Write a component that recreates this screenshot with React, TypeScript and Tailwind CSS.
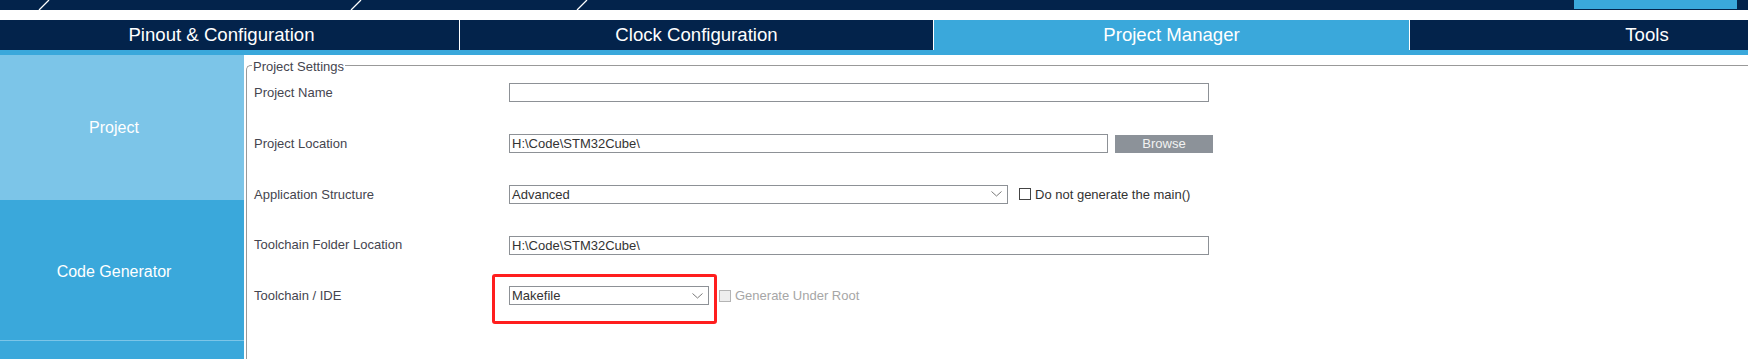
import React from "react";

const tabs = [
  { label: "Pinout & Configuration", cls: "w-[475px] bg-[#03234b]" },
  { label: "Clock Configuration", cls: "w-[474px] bg-[#03234b] border-l border-white" },
  { label: "Project Manager", cls: "w-[476px] bg-[#3aa8db] border-l border-white" },
  { label: "Tools", cls: "w-[475px] bg-[#03234b] border-l border-white" },
];

function Slash() {
  return (
    <svg width="12" height="10" viewBox="0 0 12 10" className="shrink-0">
      <line x1="1" y1="10" x2="11" y2="0" stroke="white" strokeWidth="1.3" />
    </svg>
  );
}

function Chevron() {
  return (
    <svg width="11" height="6" viewBox="0 0 11 6" className="shrink-0">
      <polyline points="0.5,0.5 5.5,5 10.5,0.5" fill="none" stroke="#7a7a7a" strokeWidth="1" />
    </svg>
  );
}

function Field({ value, className }: { value?: string; className: string }) {
  return (
    <div className={`h-[19px] border border-[#8d9196] bg-white px-[2px] text-[13px] leading-[17px] text-[#333] ${className}`}>
      {value}
    </div>
  );
}

function Select({ value, className }: { value: string; className: string }) {
  return (
    <div className={`flex h-[19px] items-center justify-between border border-[#8d9196] bg-white pl-[2px] pr-[5px] text-[13px] leading-[17px] text-[#333] ${className}`}>
      <span>{value}</span>
      <Chevron />
    </div>
  );
}

function Row({ label, children }: { label: string; children: React.ReactNode }) {
  return (
    <div className="relative flex h-[50.75px] items-center">
      <div className="w-[262px] shrink-0 pl-[7px] text-[13px] text-[#45454f]">{label}</div>
      {children}
    </div>
  );
}

export default function App() {
  return (
    <div className="h-[359px] w-[1748px] overflow-hidden bg-white font-['Liberation_Sans',Arial,sans-serif]">
      {/* breadcrumb band */}
      <div className="flex h-[10px] items-start bg-[#03234b]">
        <div className="ml-[38px]"><Slash /></div>
        <div className="ml-[300px]"><Slash /></div>
        <div className="ml-[214px]"><Slash /></div>
        <div className="ml-auto mr-[11px] h-[9px] w-[163px] bg-[#3aa8db]" />
      </div>
      <div className="h-[10px]" />

      <div className="-ml-[16px] w-[1764px]">
        {/* tabs */}
        <div className="flex h-[30px]">
          {tabs.map((t) => (
            <div key={t.label} className={`flex shrink-0 items-center justify-center text-[18.6px] text-white ${t.cls}`}>
              {t.label}
            </div>
          ))}
        </div>
        <div className="h-[5px] bg-[#3aa8db]" />

        <div className="flex h-[304px]">
          {/* sidebar */}
          <div className="flex w-[260px] shrink-0 flex-col bg-[#3aa8db] text-[16px] text-white">
            <div className="flex h-[145px] items-center justify-center bg-[#7cc5e8] pt-[1px]">Project</div>
            <div className="flex h-[141px] items-center justify-center border-b border-[#7cc5e8] pt-[4px]">Code Generator</div>
          </div>

          {/* content */}
          <div className="flex-1 bg-white pl-[2px] pt-[10px]">
            <div className="h-full rounded-tl-[5px] border-l border-t border-[#999]">
              <div className="-mt-[7px] ml-[5px] h-[8.5px] w-fit bg-white px-[1px] text-[13px] leading-[15px] text-[#45454f]">
                Project Settings
              </div>

              <Row label="Project Name">
                <Field className="w-[700px]" />
              </Row>
              <Row label="Project Location">
                <Field className="w-[599px]" value={"H:\\Code\\STM32Cube\\"} />
                <div className="ml-[7px] flex h-[18px] w-[98px] items-center justify-center bg-[#8c9299] text-[13px] text-[#f2f2f2]">
                  Browse
                </div>
              </Row>
              <Row label="Application Structure">
                <Select className="w-[499px]" value="Advanced" />
                <div className="ml-[11px] h-[12px] w-[12px] border border-[#444] bg-white" />
                <span className="ml-[4px] text-[13px] text-[#333]">Do not generate the main()</span>
              </Row>
              <Row label="Toolchain Folder Location">
                <Field className="w-[700px]" value={"H:\\Code\\STM32Cube\\"} />
              </Row>
              <Row label="Toolchain / IDE">
                <Select className="w-[200px]" value="Makefile" />
                <div className="ml-[10px] h-[12px] w-[12px] border border-[#b4b4b4] bg-[#eeeeee]" />
                <span className="ml-[4px] text-[13px] text-[#a6a6a6]">Generate Under Root</span>
                <div className="pointer-events-none absolute left-[244.7px] top-[3.8px] h-[50px] w-[225px] rounded-[3px] border-[3px] border-[#ff1e1e]" />
              </Row>
            </div>
          </div>
        </div>
      </div>
    </div>
  );
}
